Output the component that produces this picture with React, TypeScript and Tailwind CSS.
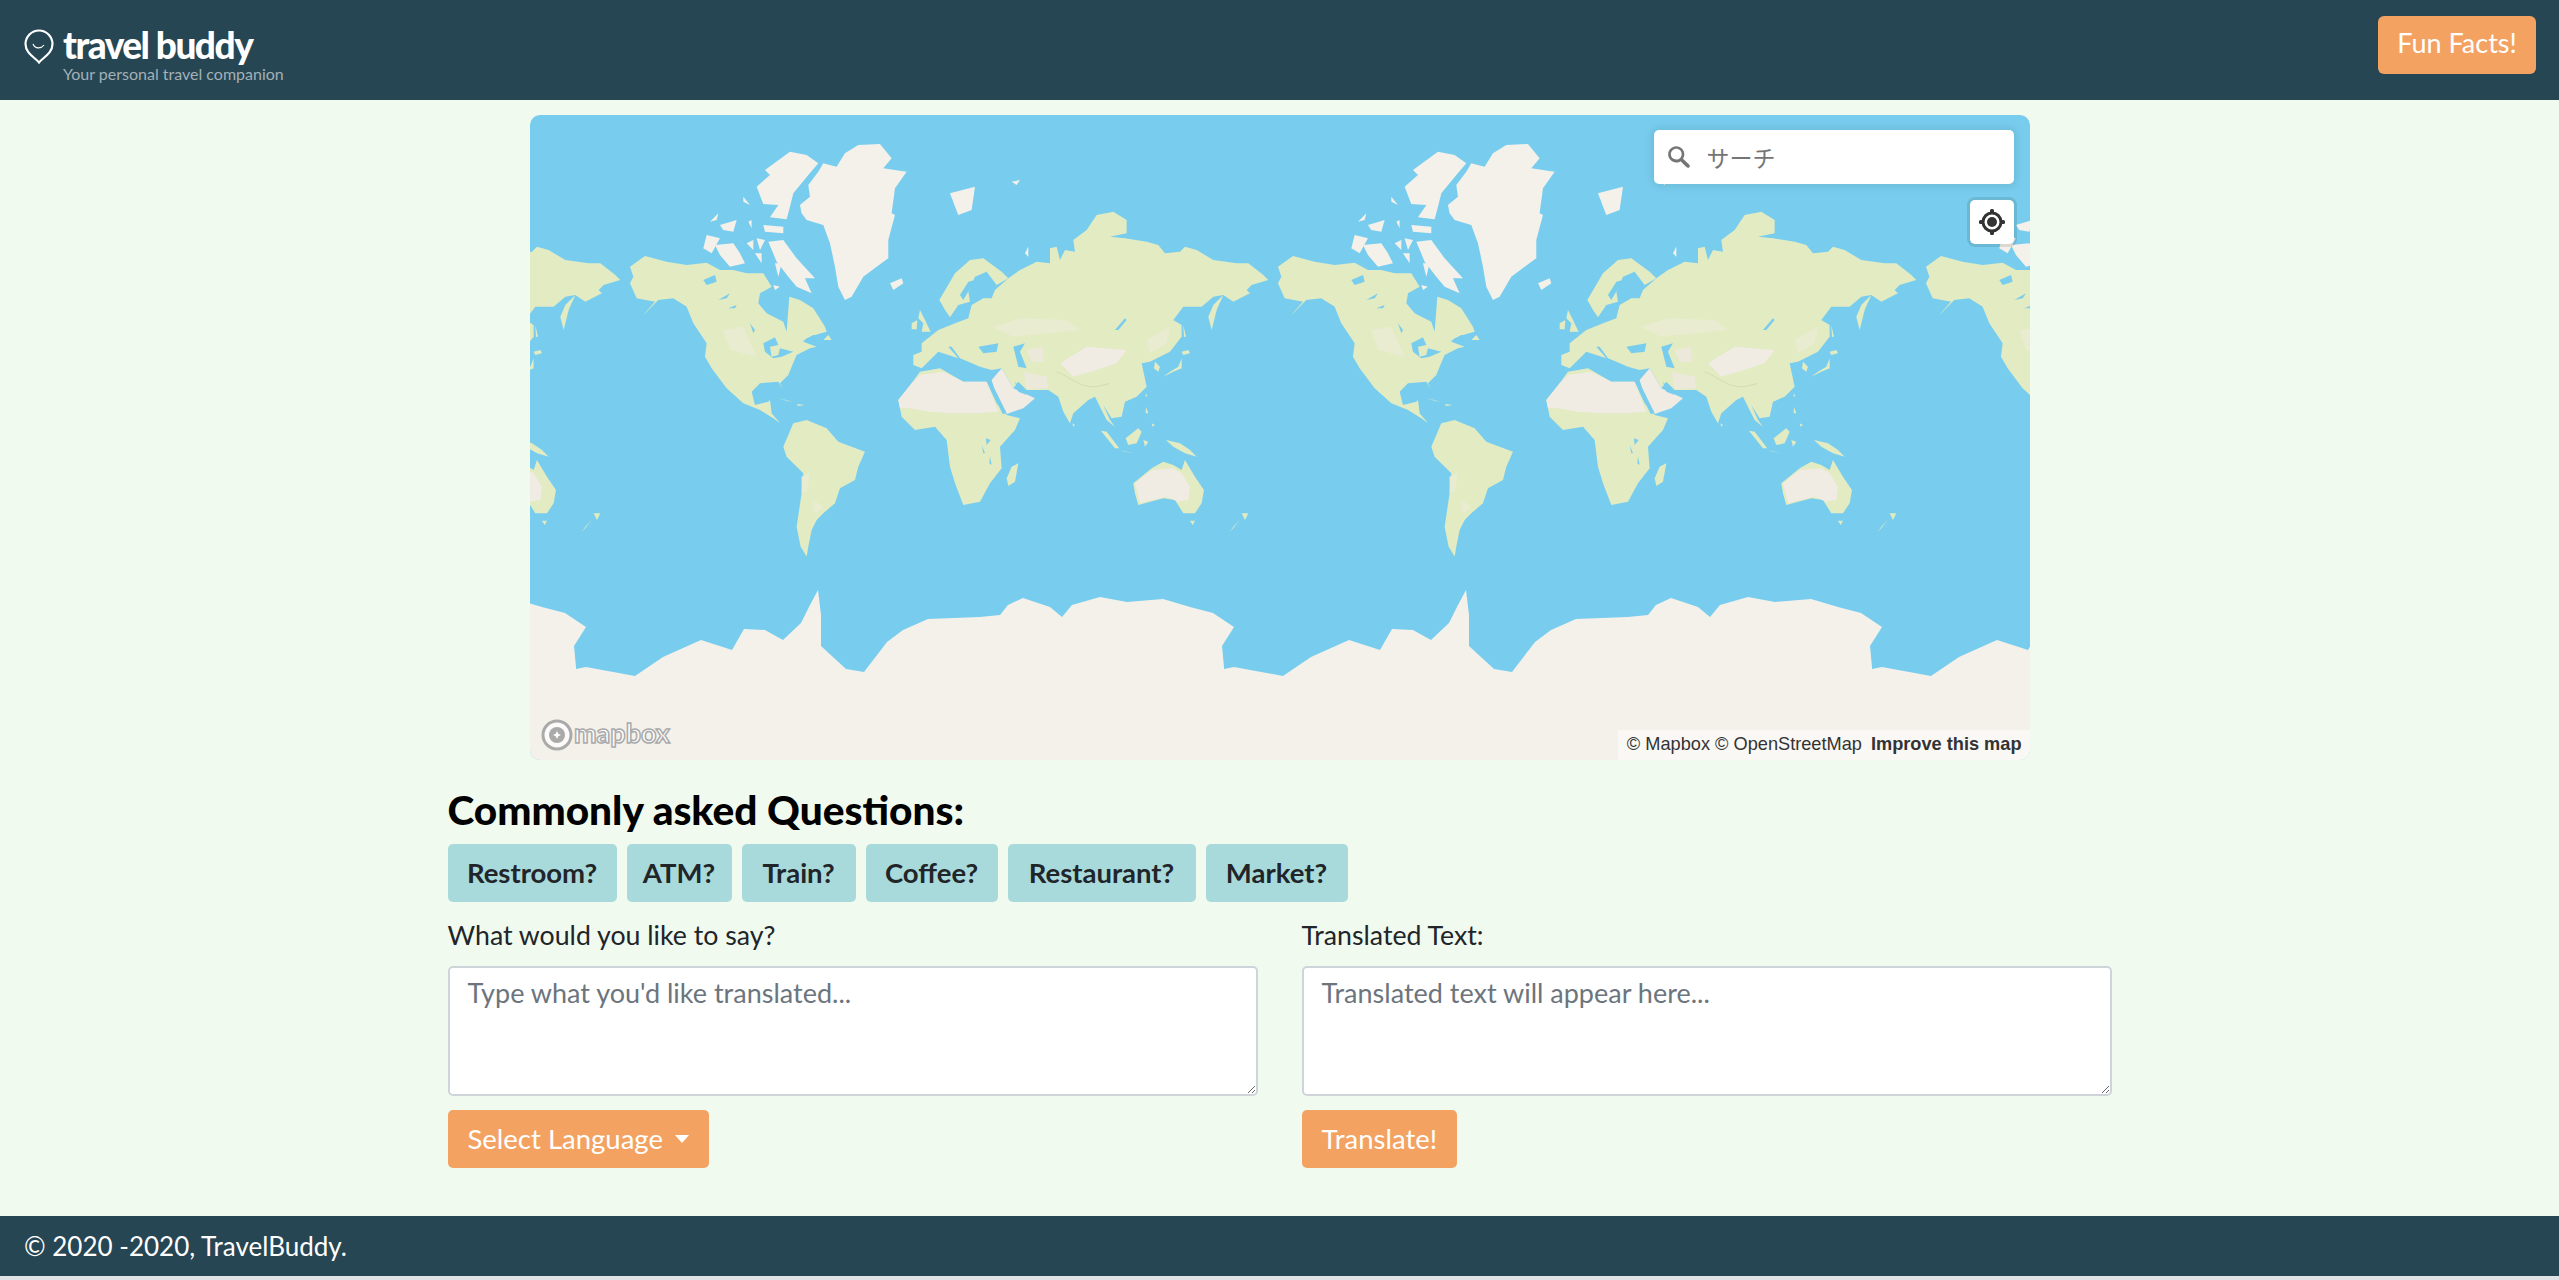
import React from 'react';

const chips = [
  { label: 'Restroom?', width: 'w-[169px]' },
  { label: 'ATM?', width: 'w-[105px]' },
  { label: 'Train?', width: 'w-[114px]' },
  { label: 'Coffee?', width: 'w-[132px]' },
  { label: 'Restaurant?', width: 'w-[188px]' },
  { label: 'Market?', width: 'w-[142px]' },
];

const OCEAN = '#78cdee';
const LAND = '#e2ebc2';
const PALE = '#e9ecd0';
const SOFT = '#ece9da';
const SAND = '#f0ebe3';
const ICE = '#f4f1ea';

// west half, traced at 3x from x=530 y=130
const westLand = [
  'M300,410 L345,378 L410,395 L470,405 L530,398 L570,420 L610,420 L650,430 L700,430 L725,470 L690,490 L685,520 L710,550 L760,575 L770,605 L778,500 L810,510 L850,535 L885,590 L890,605 L865,612 L830,625 L820,635 L860,650 L840,655 L800,675 L785,710 L775,735 L750,760 L760,778 L745,755 L690,760 L665,785 L675,825 L715,815 L720,810 L725,850 L750,880 L730,865 L690,840 L640,820 L590,775 L545,715 L525,680 L530,640 L490,580 L470,530 L430,505 L385,510 L335,560 L375,515 L320,505 L300,460 L310,440 Z',
  'M760,950 L790,880 L830,870 L890,895 L925,935 L1005,965 L985,1010 L975,1050 L930,1075 L915,1120 L880,1150 L860,1170 L845,1200 L835,1250 L830,1280 L812,1250 L800,1190 L815,1090 L820,1030 L770,980 Z',
  'M745,805 L790,815 L770,812 Z',
  'M800,822 L825,825 L805,828 Z',
  'M880,630 L895,615 L905,630 Z',
];
const westPale = [
  'M580,600 L640,590 L680,680 L600,660 Z',
  'M815,1040 L840,1030 L830,1085 L815,1090 Z',
  'M850,1110 L880,1130 L860,1150 L850,1140 Z',
];
const westIce = [
  'M810,225 L840,200 L835,165 L865,125 L880,100 L920,110 L945,70 L985,45 L1050,42 L1085,85 L1060,115 L1130,125 L1095,175 L1085,250 L1095,255 L1075,330 L1075,385 L1040,410 L1000,440 L965,500 L945,510 L925,470 L915,410 L900,340 L880,285 L830,270 L815,250 Z',
  'M705,120 L780,65 L830,75 L865,100 L835,135 L790,190 L780,230 L770,268 L720,262 L745,225 L700,222 L680,170 L720,135 Z',
  'M520,355 L530,315 L570,325 L545,370 Z',
  'M555,345 L610,340 L630,370 L645,400 L600,410 L570,375 Z',
  'M715,335 L760,330 L800,385 L855,445 L825,445 L845,490 L800,470 L775,440 L740,395 Z',
  'M570,285 L620,270 L610,305 L580,300 Z',
  'M700,285 L760,290 L760,310 L705,305 Z',
  'M640,200 L660,225 L640,215 Z',
  'M540,275 L565,250 L560,270 Z',
  'M680,325 L705,330 L690,360 Z',
  'M650,340 L670,330 L670,360 Z',
  'M675,370 L695,370 L695,400 Z',
  'M735,400 L755,400 L745,440 Z',
  'M655,275 L665,270 L665,295 Z',
  'M780,440 L810,450 L815,470 Z',
  'M730,465 L750,470 L735,480 Z',
  'M1260,190 L1335,170 L1325,240 L1285,255 Z',
  'M1445,155 L1470,150 L1460,165 Z',
];
const westWater = [
  'M520,450 L555,435 L560,455 L530,465 Z',
  'M565,510 L600,490 L590,505 Z',
  'M595,535 L620,525 L615,535 Z',
  'M660,580 L675,600 L670,610 Z',
  'M700,640 L735,622 L745,645 L720,650 L725,680 L745,675 L750,655 L790,665 L755,680 L730,685 L705,665 Z',
  'M815,635 L850,615 L870,615 L840,625 Z',
];

// east half, traced at 3x from x=880 y=230
const eastLand = [
  'M55,510 L95,460 L120,425 L180,415 L250,455 L320,455 L350,520 L380,555 L420,565 L405,600 L360,650 L365,715 L330,760 L300,815 L250,825 L225,760 L210,710 L200,630 L165,590 L105,600 L65,560 Z',
  'M415,700 L405,755 L385,768 L380,745 L395,710 Z',
  'M100,375 L125,365 L125,340 L175,300 L225,280 L265,265 L275,225 L310,205 L335,205 L345,180 L385,145 L420,120 L470,95 L510,100 L510,55 L530,50 L540,90 L555,60 L585,65 L580,30 L620,0 L650,-45 L700,-55 L740,-30 L740,10 L690,20 L735,25 L800,35 L835,45 L855,70 L900,65 L915,50 L950,60 L1000,90 L1070,100 L1105,100 L1150,135 L1165,150 L1115,165 L1100,180 L1110,190 L1060,215 L1030,195 L1000,200 L965,230 L910,230 L880,270 L905,285 L905,320 L870,365 L810,395 L785,400 L800,470 L770,500 L735,515 L725,560 L695,565 L670,525 L690,570 L705,590 L680,570 L645,500 L625,510 L580,550 L570,580 L550,545 L535,500 L505,480 L440,480 L415,455 L400,475 L365,415 L335,420 L300,410 L265,395 L240,385 L215,350 L205,350 L235,385 L175,365 L150,390 L125,415 L100,405 Z',
  'M178,210 L225,130 L270,90 L310,85 L365,125 L385,145 L350,165 L320,125 L285,140 L265,185 L270,215 L235,225 L210,262 L195,240 Z',
  'M120,240 L135,270 L152,305 L125,305 L130,280 L115,265 Z',
  'M95,280 L112,270 L110,298 L95,298 Z',
  'M1030,195 L1010,240 L995,300 L985,260 L1000,225 Z',
  'M910,285 L918,320 L912,320 Z',
  'M905,365 L925,360 L930,370 L910,375 Z',
  'M905,385 L905,415 L880,425 L850,440 L870,425 L895,410 Z',
  'M825,395 L840,410 L835,425 L822,415 Z',
  'M797,490 L802,498 L797,500 Z',
  'M798,530 L805,550 L797,550 Z',
  'M815,580 L825,585 L818,590 Z',
  'M577,580 L585,585 L580,590 Z',
  'M663,602 L680,605 L718,655 L705,655 Z',
  'M718,660 L760,670 L735,665 Z',
  'M737,625 L775,595 L785,605 L770,640 L745,645 Z',
  'M790,630 L805,635 L795,650 Z',
  'M858,630 L900,640 L930,660 L950,680 L915,670 L880,650 Z',
  'M760,760 L815,715 L850,695 L880,705 L905,720 L915,690 L945,740 L972,780 L965,820 L945,850 L910,850 L885,810 L850,805 L775,825 L765,790 Z',
  'M930,872 L945,872 L938,885 Z',
  'M1085,850 L1105,850 L1095,870 Z',
  'M1080,870 L1048,908 L1060,890 Z',
];
const eastPale = [
  'M340,290 L420,265 L560,270 L600,300 L500,310 L400,320 Z',
  'M800,330 L870,290 L860,340 L810,370 Z',
];
const eastSoft = [
  'M430,425 L500,440 L505,475 L440,478 Z',
  'M440,360 L490,350 L490,395 L455,395 Z',
];
const eastSand = [
  'M55,510 L95,460 L120,435 L190,425 L250,455 L320,455 L355,545 L290,550 L210,550 L150,545 L90,535 L60,535 Z',
  'M335,450 L365,415 L400,475 L465,505 L430,535 L380,552 L350,500 Z',
  'M540,400 L620,350 L740,360 L710,400 L650,420 L580,440 Z',
  'M765,760 L815,720 L880,715 L905,730 L930,770 L925,810 L895,815 L860,800 L780,820 Z',
];
const eastWater = [
  'M322,455 L335,458 L380,550 L368,552 Z',
  'M405,455 L440,495 L415,485 Z',
  'M295,350 L355,340 L350,365 L310,370 Z',
  'M400,350 L435,340 L420,365 L440,415 L415,410 Z',
  'M265,155 L285,150 L250,210 L240,195 Z',
  'M735,265 L740,270 L715,300 L705,300 Z',
  'M318,625 L332,630 L320,645 Z',
  'M305,645 L315,670 L310,670 Z',
  'M330,680 L335,705 L328,700 Z',
];
const eastIce = [
  'M30,160 L65,145 L70,160 L40,180 Z',
  'M435,70 L470,0 L465,10 L445,50 L445,80 Z',
];

// drawn in map pixels, wraps every 648
const antarctica =
  'M46,554 L56,552 L105,561 L133,542 L171,525 L202,535 L214,514 L235,515 L253,525 L271,508 L280,490 L288,475 L291,500 L291,531 L316,554 L334,557 L357,527 L373,515 L398,504 L450,502 L470,500 L478,490 L493,483 L520,492 L532,502 L542,490 L570,482 L597,487 L633,484 L660,492 L683,498 L704,512 L692,531 L694,552 L694,660 L46,660 Z';

const Paths = ({ list, fill }: { list: string[]; fill: string }) => (
  <>
    {list.map((d) => (
      <path key={d} d={d} fill={fill} />
    ))}
  </>
);

const World = ({ dx }: { dx: number }) => (
  <g transform={`translate(${dx} 0)`}>
    <g transform="translate(0 15) scale(0.3333)">
      <Paths list={westLand} fill={LAND} />
      <Paths list={westPale} fill={PALE} />
      <Paths list={westIce} fill={ICE} />
      <Paths list={westWater} fill={OCEAN} />
    </g>
    <g transform="translate(350 115) scale(0.3333)">
      <Paths list={eastLand} fill={LAND} />
      <Paths list={eastPale} fill={PALE} />
      <Paths list={eastSoft} fill={SOFT} />
      <Paths list={eastSand} fill={SAND} />
      <Paths list={eastIce} fill={ICE} />
      <Paths list={eastWater} fill={OCEAN} />
      <path d="M530,425 C570,440 600,475 650,470 L690,460" fill="none" stroke="#d6dbb0" strokeWidth="3" />
    </g>
    <path d={antarctica} fill={ICE} />
  </g>
);

const App = () => {
  return (
    <div className="flex h-[1280px] flex-col bg-[#dfe3e6] font-['Lato',sans-serif]">
      <header className="flex h-[100px] items-start justify-between bg-[#264653] pt-[16px] pr-[23px] pl-6">
        <div className="mt-[13px] flex items-start gap-[9px]">
          <svg width="30" height="35" viewBox="0 0 30 35" fill="none" stroke="#fff">
            <path d="M15 33.5 C12 29 1.5 25 1.5 15 A13.5 13.5 0 0 1 28.5 15 C28.5 25 18 29 15 33.5 Z" strokeWidth="2.2" />
            <path d="M9 15 C11 20 17 20 20 16" strokeWidth="1.2" />
          </svg>
          <div className="mt-[-1px] flex flex-col">
            <span className="text-[37px] leading-[34px] font-black tracking-[-1.5px] text-white">travel buddy</span>
            <span className="mt-[2px] text-[16px] leading-[20px] text-[#a3b0b7]">Your personal travel companion</span>
          </div>
        </div>
        <button className="h-[58px] w-[158px] rounded-[6px] bg-[#f4a261] pb-[3px] text-[27px] text-white">Fun Facts!</button>
      </header>

      <main className="flex flex-1 flex-col items-center bg-[#f1faee]">
        <div className="relative mt-[15px] h-[645px] w-[1500px] overflow-hidden rounded-[10px] bg-[#78cdee]">
          <svg width="1500" height="645" viewBox="0 0 1500 645" className="block">
            <World dx={-648} />
            <World dx={0} />
            <World dx={648} />
            <World dx={1296} />
          </svg>

          <div className="absolute top-[15px] right-[16px] flex h-[54px] w-[360px] items-center rounded-[5px] bg-white pl-[10px] shadow-[0_0_10px_2px_rgba(0,0,0,0.1)]">
            <svg width="30" height="30" viewBox="0 0 18 18" fill="#757575">
              <path d="M7.4 2.5c-2.7 0-4.9 2.2-4.9 4.9s2.2 4.9 4.9 4.9c1 0 1.8-.2 2.5-.8l3.7 3.7c.2.2.4.3.8.3.7 0 1.1-.4 1.1-1.1 0-.3-.1-.5-.3-.8L11.4 10c.4-.8.8-1.6.8-2.5.1-2.8-2.1-5-4.8-5zm0 1.6c1.8 0 3.2 1.4 3.2 3.2s-1.4 3.2-3.2 3.2-3.3-1.3-3.3-3.1 1.4-3.3 3.3-3.3z" />
            </svg>
            <span className="ml-[13px] font-['Noto_Sans_CJK_JP',sans-serif] text-[23px] text-[#757575]">サーチ</span>
          </div>

          <div className="absolute top-[85px] right-[16px] flex h-[44px] w-[44px] items-center justify-center rounded-[5px] bg-white shadow-[0_0_0_3px_rgba(0,0,0,0.1)]">
            <svg width="28" height="28" viewBox="0 0 28 28" fill="#333">
              <circle cx="14" cy="14" r="9" fill="none" stroke="#333" strokeWidth="3" />
              <circle cx="14" cy="14" r="5" />
              <rect x="12" y="1" width="4" height="4" rx="1.5" />
              <rect x="12" y="23" width="4" height="4" rx="1.5" />
              <rect x="1" y="12" width="4" height="4" rx="1.5" />
              <rect x="23" y="12" width="4" height="4" rx="1.5" />
            </svg>
          </div>

          <div className="absolute bottom-[8px] left-[10px] flex items-center">
            <svg width="150" height="34" viewBox="0 0 150 34">
              <circle cx="17" cy="17" r="14" fill="#fff" fillOpacity="0.7" stroke="#aaa" strokeWidth="3" />
              <circle cx="17" cy="17" r="8" fill="#aaa" />
              <path d="M17 13 L18.3 15.7 L21 17 L18.3 18.3 L17 21 L15.7 18.3 L13 17 L15.7 15.7 Z" fill="#fff" />
              <text x="34" y="25" fontFamily="Lato, sans-serif" fontSize="27" fontWeight="700" fill="#fff" stroke="#aaa" strokeWidth="1.5">mapbox</text>
            </svg>
          </div>

          <div className="absolute right-0 bottom-0 flex h-[30px] w-[412px] items-center justify-end gap-[9px] bg-white/50 pr-[8px] font-['Liberation_Sans',sans-serif] text-[18.2px] whitespace-nowrap text-[#333]">
            <span>© Mapbox © OpenStreetMap</span>
            <span className="font-bold">Improve this map</span>
          </div>
        </div>

        <div className="w-[1664px]">
          <h2 className="mt-[26px] text-[40.6px] leading-[48px] font-black text-black">Commonly asked Questions:</h2>
          <div className="mt-[10px] flex gap-[10px]">
            {chips.map((c) => (
              <button key={c.label} className={`${c.width} h-[58px] rounded-[5px] bg-[#a8dadc] text-[27.5px] font-bold whitespace-nowrap text-[#212529]`}>
                {c.label}
              </button>
            ))}
          </div>
          <div className="mt-[15px] grid grid-cols-2 gap-[44px]">
            <div className="flex flex-col items-start">
              <label className="text-[26.7px] leading-[36px] text-[#212529]">What would you like to say?</label>
              <textarea className="mt-[13px] h-[130px] w-full rounded-[5px] border-2 border-[#ced4da] bg-white px-[18px] py-[5px] text-[27px] placeholder:text-[#6c757d]" placeholder="Type what you'd like translated..." />
              <button className="mt-[14px] flex h-[58px] items-center rounded-[5px] bg-[#f4a261] px-[20px] text-[27.5px] text-white">
                Select Language
                <span className="ml-[12px] h-0 w-0 border-x-[7px] border-t-[8px] border-x-transparent border-t-white" />
              </button>
            </div>
            <div className="flex flex-col items-start">
              <label className="text-[26.7px] leading-[36px] text-[#212529]">Translated Text:</label>
              <textarea className="mt-[13px] h-[130px] w-full rounded-[5px] border-2 border-[#ced4da] bg-white px-[18px] py-[5px] text-[27px] placeholder:text-[#6c757d]" placeholder="Translated text will appear here..." />
              <button className="mt-[14px] h-[58px] rounded-[5px] bg-[#f4a261] px-[20px] text-[27.5px] text-white">Translate!</button>
            </div>
          </div>
        </div>
      </main>

      <footer className="mb-[4px] flex h-[60px] items-center bg-[#264653] px-6 text-[26px] text-white">© 2020 -2020, TravelBuddy.</footer>
    </div>
  );
};

export default App;
